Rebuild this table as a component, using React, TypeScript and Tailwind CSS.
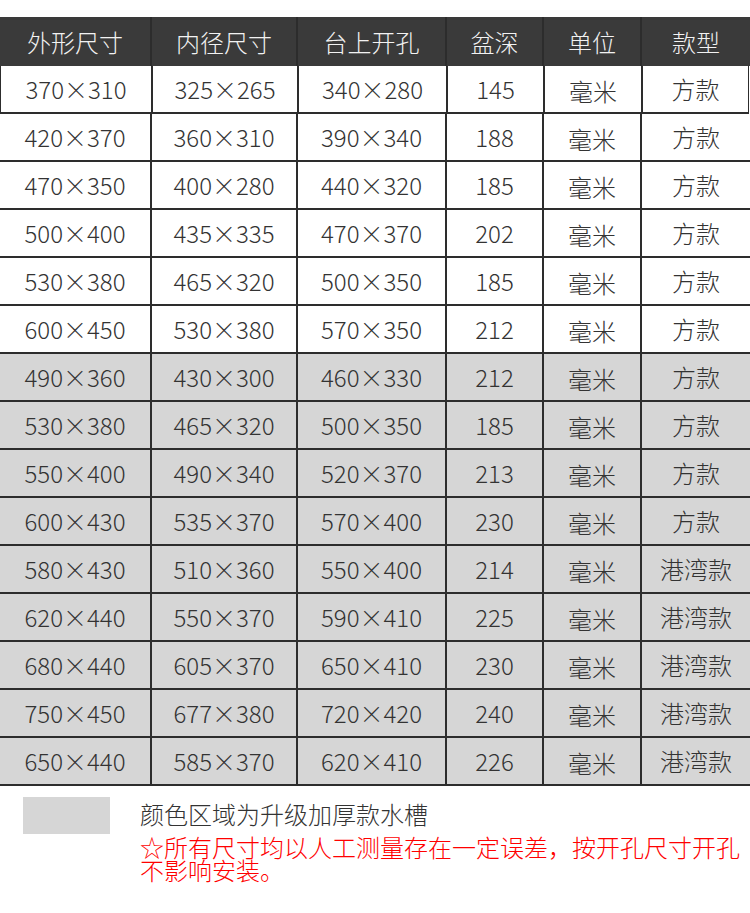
import React from "react";

const header = ["外形尺寸", "内径尺寸", "台上开孔", "盆深", "单位", "款型"];

const rows: [string, string, string, string, string][] = [
  ["370×310", "325×265", "340×280", "145", "方款"],
  ["420×370", "360×310", "390×340", "188", "方款"],
  ["470×350", "400×280", "440×320", "185", "方款"],
  ["500×400", "435×335", "470×370", "202", "方款"],
  ["530×380", "465×320", "500×350", "185", "方款"],
  ["600×450", "530×380", "570×350", "212", "方款"],
  ["490×360", "430×300", "460×330", "212", "方款"],
  ["530×380", "465×320", "500×350", "185", "方款"],
  ["550×400", "490×340", "520×370", "213", "方款"],
  ["600×430", "535×370", "570×400", "230", "方款"],
  ["580×430", "510×360", "550×400", "214", "港湾款"],
  ["620×440", "550×370", "590×410", "225", "港湾款"],
  ["680×440", "605×370", "650×410", "230", "港湾款"],
  ["750×450", "677×380", "720×420", "240", "港湾款"],
  ["650×440", "585×370", "620×410", "226", "港湾款"],
];

const cols = "grid grid-cols-[150px_146px_149px_97px_98px_1fr]";

export default function App() {
  return (
    <div
      className="w-[750px] h-[913px] bg-white overflow-hidden pt-[17px] font-light"
      style={{ fontFamily: '"Noto Sans CJK SC", "Noto Sans", sans-serif' }}
    >
      <div className={`${cols} h-[49px] bg-[#3a3a3a] text-[#f2f2f2] text-[24px]`}>
        {header.map((h, i) => (
          <div
            key={h}
            className={`flex items-center justify-center ${i > 0 ? "border-l-2 border-[#2c2c2c]" : ""}`}
          >
            {h}
          </div>
        ))}
      </div>
      {rows.map((r, ri) => {
        const cells = [r[0], r[1], r[2], r[3], "毫米", r[4]];
        const gray = ri >= 6;
        const first = ri === 0;
        return (
          <div
            key={ri}
            className={`${cols} h-[48px] border-b-2 border-[#2d2d2d] text-[24px] text-[#333333] ${
              gray ? "bg-[#d6d6d6]" : "bg-white"
            } ${first ? "border-l-[1.5px] border-r-[1.5px] mr-[1px]" : ""}`}
          >
            {cells.map((c, ci) => (
              <div
                key={ci}
                className={`flex items-center justify-center ${ci > 0 ? "border-l-2 border-[#2d2d2d]" : ""} ${
                  ci === 4 ? "pt-[3px]" : ""
                }`}
              >
                {c}
              </div>
            ))}
          </div>
        );
      })}
      <div className="flex mt-[11px]">
        <div className="ml-[23px] w-[87px] h-[37px] bg-[#d6d6d6]" />
        <div className="ml-[30px] flex flex-col">
          <div className="text-[24px] leading-[30px] text-[#333333] mt-[2px]">
            颜色区域为升级加厚款水槽
          </div>
          <div className="text-[24px] leading-[23px] text-[#ff0000] mt-[6px] w-[605px]">
            ☆所有尺寸均以人工测量存在一定误差，按开孔尺寸开孔不影响安装。
          </div>
        </div>
      </div>
    </div>
  );
}
